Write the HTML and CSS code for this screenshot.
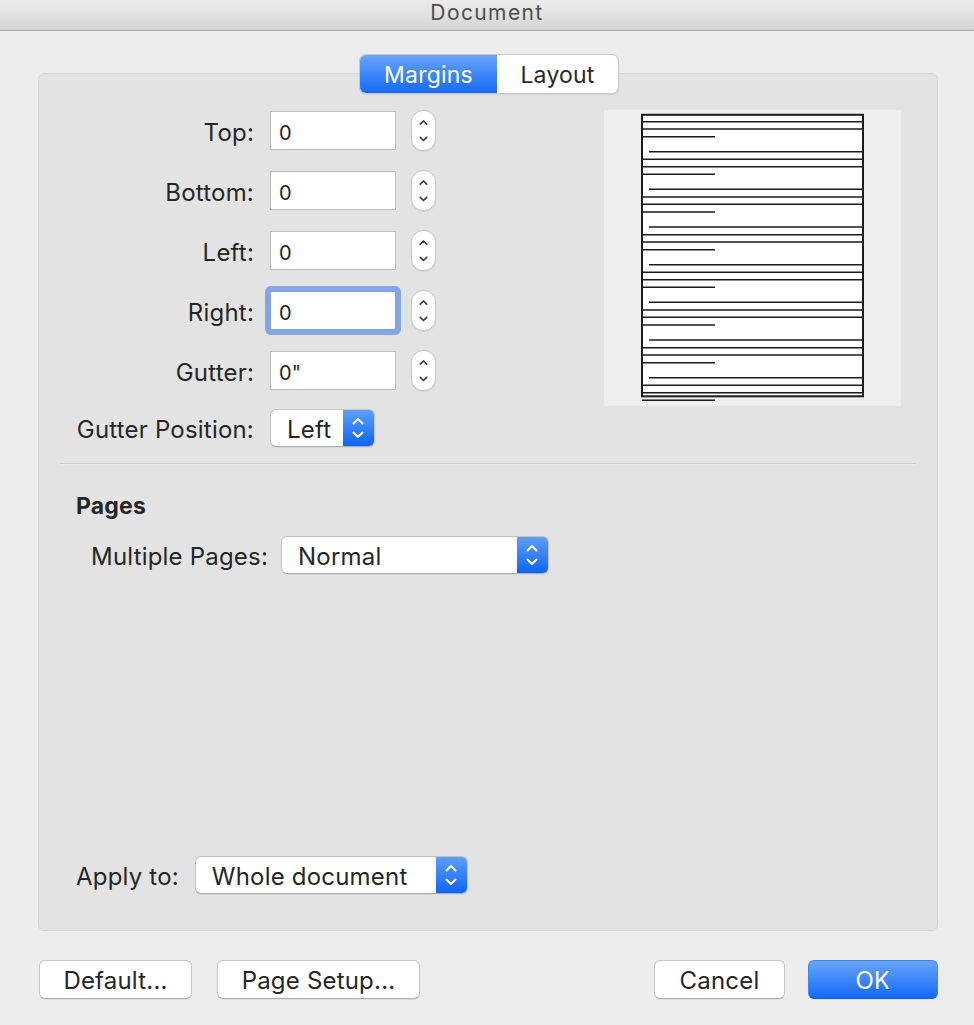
FILE: index.html
```html
<!DOCTYPE html>
<html>
<head>
<meta charset="utf-8">
<title>Document</title>
<link rel="stylesheet" href="styles.css">
</head>
<body>
<div class="titlebar">Document</div>
<div class="main">
  <div class="panel">
    <div class="tabs">
      <div class="tab tab-margins active">Margins</div>
      <div class="tab tab-layout">Layout</div>
    </div>

    <div class="top">
      <div class="form">
        <div class="label">Top:</div>
        <div class="field">0</div>
        <div class="stepper"><svg width="23" height="39" viewBox="0 0 23 39"><path d="M8.3 13.2 L11.5 10 L14.7 13.2 M8.3 26.3 L11.5 29.5 L14.7 26.3" fill="none" stroke="#3c3c3c" stroke-width="1.7" stroke-linecap="round" stroke-linejoin="round"/></svg></div>

        <div class="label">Bottom:</div>
        <div class="field">0</div>
        <div class="stepper"><svg width="23" height="39" viewBox="0 0 23 39"><path d="M8.3 13.2 L11.5 10 L14.7 13.2 M8.3 26.3 L11.5 29.5 L14.7 26.3" fill="none" stroke="#3c3c3c" stroke-width="1.7" stroke-linecap="round" stroke-linejoin="round"/></svg></div>

        <div class="label">Left:</div>
        <div class="field">0</div>
        <div class="stepper"><svg width="23" height="39" viewBox="0 0 23 39"><path d="M8.3 13.2 L11.5 10 L14.7 13.2 M8.3 26.3 L11.5 29.5 L14.7 26.3" fill="none" stroke="#3c3c3c" stroke-width="1.7" stroke-linecap="round" stroke-linejoin="round"/></svg></div>

        <div class="label">Right:</div>
        <div class="field focused">0</div>
        <div class="stepper"><svg width="23" height="39" viewBox="0 0 23 39"><path d="M8.3 13.2 L11.5 10 L14.7 13.2 M8.3 26.3 L11.5 29.5 L14.7 26.3" fill="none" stroke="#3c3c3c" stroke-width="1.7" stroke-linecap="round" stroke-linejoin="round"/></svg></div>

        <div class="label">Gutter:</div>
        <div class="field">0"</div>
        <div class="stepper"><svg width="23" height="39" viewBox="0 0 23 39"><path d="M8.3 13.2 L11.5 10 L14.7 13.2 M8.3 26.3 L11.5 29.5 L14.7 26.3" fill="none" stroke="#3c3c3c" stroke-width="1.7" stroke-linecap="round" stroke-linejoin="round"/></svg></div>

        <div class="label last">Gutter Position:</div>
        <div class="select select-gutter last">
          <span class="select-text">Left</span>
          <span class="select-arrow"><svg width="30" height="36" viewBox="0 0 30 36"><path d="M10.5 13.5 L15 9 L19.5 13.5 M10.5 22.5 L15 27 L19.5 22.5" fill="none" stroke="#fff" stroke-width="2" stroke-linecap="round" stroke-linejoin="round"/></svg></span>
        </div>
      </div>

      <div class="preview">
        <svg width="297" height="296" viewBox="0 0 297 296">
          <rect x="38" y="4.8" width="221" height="281.5" fill="#fff" stroke="#1a1a1a" stroke-width="2"/>
          <path fill="none" stroke="#1a1a1a" stroke-width="1.6" d="M38 11.7H259 M38 19H259 M38 49.3H259 M38 56.7H259 M38 87H259 M38 94.3H259 M38 124.7H259 M38 132H259 M38 162.3H259 M38 169.7H259 M38 200H259 M38 207.3H259 M38 237.7H259 M38 245H259 M38 275.3H259 M38 282.7H259"/>
          <path fill="none" stroke="#1a1a1a" stroke-width="1.6" d="M38 26.7H111 M38 64.3H111 M38 102H111 M38 139.7H111 M38 177.3H111 M38 215H111 M38 252.7H111 M38 290.3H111"/>
          <path fill="none" stroke="#1a1a1a" stroke-width="1.6" d="M45 41.7H259 M45 79.3H259 M45 117H259 M45 154.7H259 M45 192.3H259 M45 230H259 M45 267.7H259"/>
        </svg>
      </div>
    </div>

    <div class="separator"></div>

    <div class="pages">
      <div class="heading">Pages</div>
      <div class="row row-indent">
        <div class="row-label">Multiple Pages:</div>
        <div class="select select-pages">
          <span class="select-text">Normal</span>
          <span class="select-arrow"><svg width="30" height="36" viewBox="0 0 30 36"><path d="M10.5 13.5 L15 9 L19.5 13.5 M10.5 22.5 L15 27 L19.5 22.5" fill="none" stroke="#fff" stroke-width="2" stroke-linecap="round" stroke-linejoin="round"/></svg></span>
        </div>
      </div>
    </div>

    <div class="row apply">
      <div class="row-label">Apply to:</div>
      <div class="select select-apply">
        <span class="select-text">Whole document</span>
        <span class="select-arrow"><svg width="30" height="36" viewBox="0 0 30 36"><path d="M10.5 13.5 L15 9 L19.5 13.5 M10.5 22.5 L15 27 L19.5 22.5" fill="none" stroke="#fff" stroke-width="2" stroke-linecap="round" stroke-linejoin="round"/></svg></span>
      </div>
    </div>
  </div>

  <div class="buttons">
    <div class="btn btn-default">Default...</div>
    <div class="btn btn-setup">Page Setup...</div>
    <div class="spacer"></div>
    <div class="btn btn-cancel">Cancel</div>
    <div class="btn btn-ok">OK</div>
  </div>
</div>
</body>
</html>
```

FILE: styles.css
```css
* { box-sizing: border-box; }
html, body { margin: 0; padding: 0; }
body {
  width: 974px;
  height: 1025px;
  overflow: hidden;
  background: #ececec;
  font-family: Inter, "Noto Sans", "Liberation Sans", sans-serif;
  color: #262626;
  letter-spacing: 0.2px;
}

.titlebar {
  height: 31px;
  background: linear-gradient(#ececec, #d5d5d5);
  border-bottom: 1px solid #a9a9a9;
  text-align: center;
  font-size: 21px;
  letter-spacing: 1.4px;
  line-height: 26px;
  color: #4d4d4d;
}

.main {
  padding: 42px 36px 0 38px;
}

.panel {
  height: 858px;
  background: #e3e3e3;
  border: 1px solid #d6d6d6;
  border-radius: 6px;
  display: flex;
  flex-direction: column;
}

.tabs {
  align-self: center;
  margin-top: -19px;
  margin-left: 2px;
  display: flex;
  height: 38px;
  background: #fff;
  border-radius: 6px;
  box-shadow: 0 0 0 1px #c8c8c8, 0 1px 1px 1px rgba(0, 0, 0, 0.08);
  font-size: 23px;
  overflow: hidden;
}
.tab {
  display: flex;
  align-items: center;
  justify-content: center;
  color: #2a2a2a;
  padding-top: 1px;
}
.tab-margins { width: 137px; }
.tab-layout { width: 121px; }
.tab.active {
  color: #fff;
  background: linear-gradient(#68a6fc, #1669f7);
}

.top {
  display: flex;
  justify-content: space-between;
  align-items: flex-start;
  padding: 18px 36px 0 21px;
}

.form {
  display: grid;
  grid-template-columns: 194px 126px 25px;
  grid-template-rows: repeat(5, 39px) 37px;
  column-gap: 16px;
  row-gap: 21px;
  align-items: center;
}
.label {
  justify-self: end;
  font-size: 24px;
  white-space: nowrap;
  color: #262626;
  padding-top: 3px;
}
.label.last {
  align-self: start;
  margin-top: -2px;
  line-height: 38px;
  padding-top: 2px;
}
.field {
  height: 39px;
  background: #fff;
  border: 1px solid #bcbcbc;
  font-size: 20px;
  line-height: 37px;
  padding: 3px 0 0 8px;
  color: #1e1e1e;
}
.field.focused {
  border-color: #7fa3e6;
  box-shadow: 0 0 0 5px #82a6e8;
  border-radius: 2px;
}
.stepper {
  width: 25px;
  height: 41px;
  background: #fff;
  border: 1px solid #c6c6c6;
  border-radius: 12px;
  box-shadow: 0 1px 1px rgba(0, 0, 0, 0.08);
  margin-left: -1px;
}
.stepper svg { display: block; }

.select {
  display: flex;
  height: 38px;
  background: #fff;
  border: 1px solid #c3c3c3;
  border-bottom-color: #adadad;
  border-radius: 6px;
  overflow: hidden;
  box-shadow: 0 1px 1px rgba(0, 0, 0, 0.06);
}
.select.last {
  align-self: start;
  margin-top: -2px;
  grid-column: span 2;
}
.select-text {
  flex: 1;
  font-size: 24px;
  line-height: 36px;
  padding: 2px 0 0 16px;
  color: #262626;
  white-space: nowrap;
}
.select-arrow {
  width: 31px;
  background: linear-gradient(#5e9efb, #0d66f6);
}
.select-arrow svg { display: block; }
.select-gutter { width: 105px; }
.select-pages { width: 268px; }
.select-apply { width: 273px; }

.preview {
  width: 297px;
  height: 296px;
  background: #eeeeee;
  margin-top: -1px;
}
.preview svg { display: block; }

.separator {
  margin: 15px 21px 0 21px;
  height: 2px;
  border-top: 1px solid #cdcdcd;
  border-bottom: 1px solid #e8e8e8;
}

.pages {
  padding: 27px 0 0 37px;
}
.heading {
  font-size: 23px;
  font-weight: 700;
  line-height: 28px;
  color: #262626;
}
.row {
  display: flex;
  align-items: center;
  gap: 13px;
}
.row-label {
  font-size: 24px;
  color: #262626;
  white-space: nowrap;
  padding-top: 2px;
}
.row-indent {
  margin-top: 16px;
  padding-left: 15px;
}
.apply {
  margin-top: auto;
  padding: 0 0 36px 37px;
  gap: 16px;
}

.buttons {
  display: flex;
  margin-top: 29px;
  gap: 25px;
}
.spacer { flex: 1; }
.btn {
  height: 39px;
  display: flex;
  align-items: center;
  justify-content: center;
  font-size: 24px;
  padding-top: 1px;
  background: #fff;
  border: 1px solid #c6c6c6;
  border-bottom-color: #acacac;
  border-radius: 6px;
  box-shadow: 0 1px 1px rgba(0, 0, 0, 0.06);
  color: #262626;
}
.btn-default { width: 153px; margin-left: 1px; }
.btn-setup { width: 203px; }
.btn-cancel { width: 131px; margin-right: -2px; }
.btn-ok {
  width: 130px;
  color: #fff;
  background: linear-gradient(#67a5fc, #1369f7);
  border-color: #3f84f2;
  border-bottom-color: #1a5fd6;
}
```
